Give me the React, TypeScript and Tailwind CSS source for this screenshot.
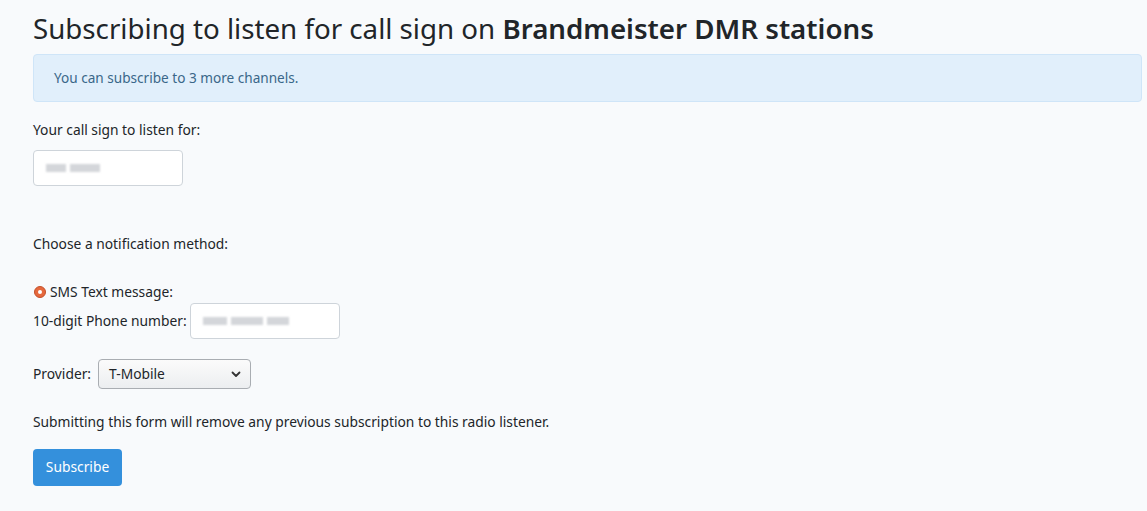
import React from "react";

function Blur({ widths }: { widths: number[] }) {
  return (
    <span className="flex items-center gap-[4px]">
      {widths.map((w, i) => (
        <span key={i} className="h-[8px] bg-[#d4d6da] blur-[1.2px]" style={{ width: w }} />
      ))}
    </span>
  );
}

export default function App() {
  return (
    <div
      className="min-h-[511px] bg-[#f8fafc] text-[#212529] pl-[33px] pr-[5px] pt-[10px]"
      style={{ fontFamily: '"Noto Sans", "Open Sans", sans-serif' }}
    >
      <h1 className="text-[27.7px] leading-[36px] font-normal m-0">
        Subscribing to listen for call sign on <b className="font-semibold">Brandmeister DMR stations</b>
      </h1>
      <div className="mt-[8px] h-[48px] rounded-[4px] border border-[#cfe5f8] bg-[#e1effb] text-[#3a6789] text-[13.6px] flex items-center pl-[20px]">
        You can subscribe to 3 more channels.
      </div>
      <div className="mt-[18px] text-[13.8px] leading-[20px]">Your call sign to listen for:</div>
      <div className="mt-[10px] w-[150px] h-[36px] rounded-[4px] border border-[#ced4da] bg-white flex items-center pl-[12px]">
        <Blur widths={[20, 30]} />
      </div>
      <div className="mt-[48px] text-[13.8px] leading-[20px]">Choose a notification method:</div>
      <div className="mt-[28px] flex items-center text-[13.8px] leading-[20px]">
        <span className="ml-[1px] w-[12px] h-[12px] rounded-full bg-[#e5683d] border border-[#c4502a] flex items-center justify-center">
          <span className="w-[4px] h-[4px] rounded-full bg-white" />
        </span>
        <span className="ml-[4px]">SMS Text message:</span>
      </div>
      <div className="mt-[1px] flex items-center text-[13.8px]">
        <span>10-digit Phone number:</span>
        <div className="ml-[3px] w-[150px] h-[36px] rounded-[4px] border border-[#ced4da] bg-white flex items-center pl-[12px]">
          <Blur widths={[24, 32, 22]} />
        </div>
      </div>
      <div className="mt-[20px] flex items-center text-[13.8px]">
        <span>Provider:</span>
        <div className="ml-[7px] w-[153px] h-[30px] rounded-[4px] border border-[#a9adb2] bg-gradient-to-b from-[#fbfbfb] to-[#eceef0] flex items-center justify-between pl-[10px] pr-[8px] text-[#212529]">
          <span>T-Mobile</span>
          <svg width="12" height="12" viewBox="0 0 12 12">
            <path d="M2.5 4.5 L6 8 L9.5 4.5" fill="none" stroke="#333" strokeWidth="1.8" strokeLinecap="round" strokeLinejoin="round" />
          </svg>
        </div>
      </div>
      <div className="mt-[21px] text-[13.8px] leading-[24px]">
        Submitting this form will remove any previous subscription to this radio listener.
      </div>
      <button className="mt-[15px] w-[89px] h-[37px] rounded-[4px] bg-[#3490dc] text-white text-[13.8px]">
        Subscribe
      </button>
    </div>
  );
}
